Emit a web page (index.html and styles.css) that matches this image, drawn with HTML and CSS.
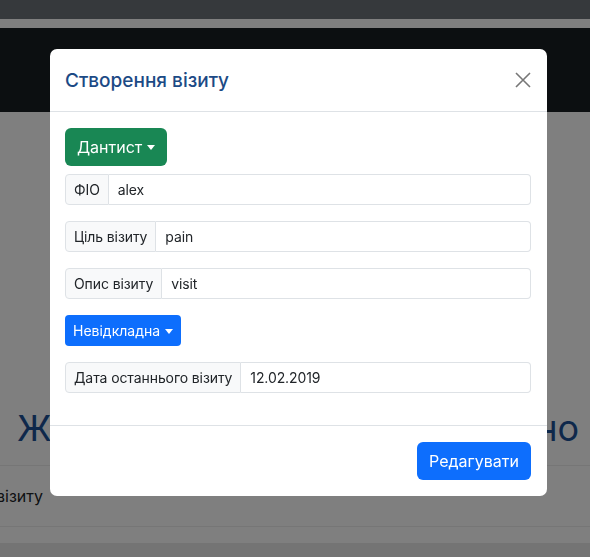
FILE: index.html
```html
<!DOCTYPE html>
<html lang="uk">
<head>
<meta charset="utf-8">
<title>Візити</title>
<link rel="stylesheet" href="styles.css">
</head>
<body>
<div class="page">
  <div class="topbar"></div>
  <div class="gap"></div>
  <nav class="navbar"></nav>
  <main class="content">
    <h1 class="title">Жодного візиту не заплановано</h1>
    <div class="table">
      <div class="row"><span class="cell">візиту</span></div>
      <div class="row empty"></div>
    </div>
    <div class="band"></div>
  </main>
</div>
<div class="backdrop"></div>
<div class="modal">
  <div class="modal-header">
    <h5 class="modal-title">Створення візиту</h5>
    <button class="close" aria-label="Закрити">
      <svg width="16" height="16" viewBox="0 0 16 16"><path d="M1 1L15 15M15 1L1 15" stroke="#777" stroke-width="1.6" fill="none"/></svg>
    </button>
  </div>
  <div class="modal-body">
    <button class="btn btn-success dropdown">Дантист</button>
    <div class="group">
      <span class="addon">ФІО</span>
      <span class="field">alex</span>
    </div>
    <div class="group">
      <span class="addon">Ціль візиту</span>
      <span class="field">pain</span>
    </div>
    <div class="group">
      <span class="addon">Опис візиту</span>
      <span class="field">visit</span>
    </div>
    <button class="btn btn-primary btn-sm dropdown">Невідкладна</button>
    <div class="group">
      <span class="addon">Дата останнього візиту</span>
      <span class="field">12.02.2019</span>
    </div>
  </div>
  <div class="modal-footer">
    <button class="btn btn-primary">Редагувати</button>
  </div>
</div>
</body>
</html>
```
FILE: styles.css
```css
* { box-sizing: border-box; }
html, body { margin: 0; padding: 0; }
body {
  font-family: Inter, "Noto Sans", "DejaVu Sans", sans-serif;
  color: #212529;
  background: #fff;
  width: 590px;
  height: 557px;
  overflow: hidden;
}
.page { display: flex; flex-direction: column; height: 557px; }
.topbar { height: 19px; background: #6c7279; }
.gap { height: 9px; background: #fff; }
.navbar { height: 84px; background: #191e23; }
.content { flex: 1; display: flex; flex-direction: column; }
.title {
  margin: 0;
  padding: 295px 12px 0 17px;
  height: 353px;
  font-size: 36px;
  font-weight: 400;
  line-height: 1.2;
  color: #1d5196;
  text-align: justify;
  text-align-last: justify;
  white-space: nowrap;
  overflow: hidden;
}
.table { display: flex; flex-direction: column; }
.row {
  height: 61px;
  border-top: 1px solid #ececec;
  display: flex;
  align-items: center;
  font-size: 16px;
  color: #212529;
}
.row.empty { height: 17px; border-top: 1px solid #ececec; }
.cell { margin-left: -4px; }
.band { flex: 1; background: #e8e8e8; }
.backdrop {
  position: fixed;
  inset: 0;
  background: rgba(0,0,0,0.5);
}
.modal {
  position: fixed;
  left: 50px;
  top: 49px;
  width: 497px;
  background: #fff;
  border-radius: 7px;
  display: flex;
  flex-direction: column;
}
.modal-header {
  height: 63px;
  padding: 0 16px 0 15px;
  border-bottom: 1px solid #dee2e6;
  display: flex;
  align-items: center;
  justify-content: space-between;
}
.modal-title {
  margin: 0;
  font-size: 19px;
  font-weight: 500;
  color: #1c4a85;
}
.close {
  border: 0;
  background: none;
  padding: 0;
  width: 16px;
  height: 16px;
  display: flex;
}
.modal-body {
  padding: 16px 16px 16px 15px;
  display: flex;
  flex-direction: column;
  align-items: flex-start;
}
.btn {
  border: 0;
  font-family: inherit;
  color: #fff;
  font-size: 16px;
  height: 38px;
  padding: 0 12px;
  border-radius: 6px;
}
.btn-success { background: #198754; margin-bottom: 8px; }
.btn-primary { background: #0d6efd; }
.btn-sm { font-size: 14px; height: 31px; padding: 0 8px; border-radius: 4px; margin-bottom: 16px; }
.dropdown::after {
  content: "";
  display: inline-block;
  margin-left: 5px;
  vertical-align: 3px;
  border-top: 5px solid #fff;
  border-left: 4px solid transparent;
  border-right: 4px solid transparent;
}
.btn-sm.dropdown::after { vertical-align: 2px; }
.group {
  align-self: stretch;
  display: flex;
  height: 31px;
  margin-bottom: 16px;
  font-size: 14px;
  letter-spacing: -0.1px;
}
.addon {
  display: flex;
  align-items: center;
  padding: 0 8px;
  background: #f8f9fa;
  border: 1px solid #dee2e6;
  border-radius: 4px 0 0 4px;
  color: #212529;
  white-space: nowrap;
}
.field {
  flex: 1;
  display: flex;
  align-items: center;
  padding: 0 9px;
  border: 1px solid #dee2e6;
  border-left: 0;
  border-radius: 0 4px 4px 0;
  color: #212529;
}
.modal-footer {
  border-top: 1px solid #dee2e6;
  padding: 16px;
  display: flex;
  justify-content: flex-end;
}
```
